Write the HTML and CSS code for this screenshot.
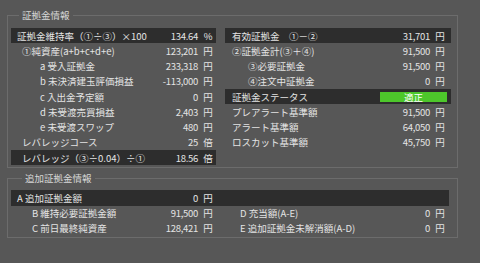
FILE: index.html
```html
<!DOCTYPE html>
<html lang="ja">
<head>
    <meta charset="UTF-8">
    <meta name="viewport" content="width=device-width, initial-scale=1.0">
    <title>証拠金情報</title>
    <link rel="stylesheet" href="styles.css">
</head>
<body>
    <fieldset class="group main">
        <legend>証拠金情報</legend>
        <div class="cols">
            <div class="col left">
                <div class="row dark"><span class="label">証拠金維持率（①÷③）×100</span><span class="num">134.64</span><span class="unit">%</span></div>
                <div class="row lv1"><span class="label">①純資産(a+b+c+d+e)</span><span class="num">123,201</span><span class="unit">円</span></div>
                <div class="row lv2"><span class="label">a 受入証拠金</span><span class="num">233,318</span><span class="unit">円</span></div>
                <div class="row lv2"><span class="label">b 未決済建玉評価損益</span><span class="num">-113,000</span><span class="unit">円</span></div>
                <div class="row lv2"><span class="label">c 入出金予定額</span><span class="num">0</span><span class="unit">円</span></div>
                <div class="row lv2"><span class="label">d 未受渡売買損益</span><span class="num">2,403</span><span class="unit">円</span></div>
                <div class="row lv2"><span class="label">e 未受渡スワップ</span><span class="num">480</span><span class="unit">円</span></div>
                <div class="row lv1"><span class="label">レバレッジコース</span><span class="num">25</span><span class="unit">倍</span></div>
                <div class="row dark lv1"><span class="label">レバレッジ（③÷0.04）÷①</span><span class="num">18.56</span><span class="unit">倍</span></div>
            </div>
            <div class="col right">
                <div class="row dark"><span class="label">有効証拠金　①－②</span><span class="num">31,701</span><span class="unit">円</span></div>
                <div class="row"><span class="label">②証拠金計(③＋④)</span><span class="num">91,500</span><span class="unit">円</span></div>
                <div class="row lv2"><span class="label">③必要証拠金</span><span class="num">91,500</span><span class="unit">円</span></div>
                <div class="row lv2"><span class="label">④注文中証拠金</span><span class="num">0</span><span class="unit">円</span></div>
                <div class="row dark"><span class="label">証拠金ステータス</span><span class="status">適正</span></div>
                <div class="row"><span class="label">プレアラート基準額</span><span class="num">91,500</span><span class="unit">円</span></div>
                <div class="row"><span class="label">アラート基準額</span><span class="num">64,050</span><span class="unit">円</span></div>
                <div class="row"><span class="label">ロスカット基準額</span><span class="num">45,750</span><span class="unit">円</span></div>
            </div>
        </div>
    </fieldset>

    <fieldset class="group extra">
        <legend>追加証拠金情報</legend>
        <div class="cols">
            <div class="row dark full">
                <div class="cell"><span class="label">A 追加証拠金額</span><span class="num">0</span><span class="unit">円</span></div>
            </div>
            <div class="row lv3"><span class="label">B 維持必要証拠金額</span><span class="num">91,500</span><span class="unit">円</span></div>
            <div class="row sub"><span class="label">D 充当額(A-E)</span><span class="num">0</span><span class="unit">円</span></div>
            <div class="row lv3"><span class="label">C 前日最終純資産</span><span class="num">128,421</span><span class="unit">円</span></div>
            <div class="row sub"><span class="label">E 追加証拠金未解消額(A-D)</span><span class="num">0</span><span class="unit">円</span></div>
        </div>
    </fieldset>
</body>
</html>
```

FILE: styles.css
```css
* {
    box-sizing: border-box;
}

body {
    margin: 0;
    background: #575757;
    color: #e4e4e4;
    font-family: "Noto Sans CJK JP", "Noto Sans", sans-serif;
    font-size: 9.5px;
}

.group {
    margin: 0 22px 0 7px;
    padding: 7px 6px 2px 3px;
    border: 1px solid #6c6c6c;
    min-width: 0;
}

.group.main {
    margin-top: 9px;
}

.group.extra {
    margin-top: 4px;
    padding-top: 6px;
    padding-bottom: 1px;
}

.group legend {
    padding: 0 3px;
    margin-left: 8px;
    line-height: 12px;
    color: #d8d8d8;
}

.group.extra legend {
    margin-left: 11px;
}

.cols {
    display: grid;
    grid-template-columns: 205px 226px;
    column-gap: 9px;
}

.row {
    display: flex;
    align-items: center;
    height: 15.25px;
    padding: 0 3px 0 6px;
    white-space: nowrap;
}

.right .row,
.row.sub {
    padding-right: 6px;
}

.dark {
    background: #2d2d2d;
}

.label {
    flex: 1;
}

.num {
    text-align: right;
    letter-spacing: -0.3px;
}

.unit {
    width: 10px;
    margin-left: 5px;
    text-align: center;
}

.lv1 {
    padding-left: 11px;
}

.left .lv2 {
    padding-left: 29px;
}

.right .lv2 {
    padding-left: 23px;
}

.right .row {
    padding-left: 7px;
}

.right .row.lv2 {
    padding-left: 23px;
}

.status {
    width: 67px;
    height: 10px;
    margin-right: -2px;
    background: #4dc72b;
    color: #ffffff;
    line-height: 10px;
    text-align: center;
}

.full {
    grid-column: 1 / -1;
    padding: 0;
    margin-right: 2px;
}

.full .cell {
    display: flex;
    align-items: center;
    width: 205px;
    padding: 0 3px 0 6px;
}

.lv3 {
    padding-left: 21px;
}

.sub {
    padding-left: 15px;
}
```
